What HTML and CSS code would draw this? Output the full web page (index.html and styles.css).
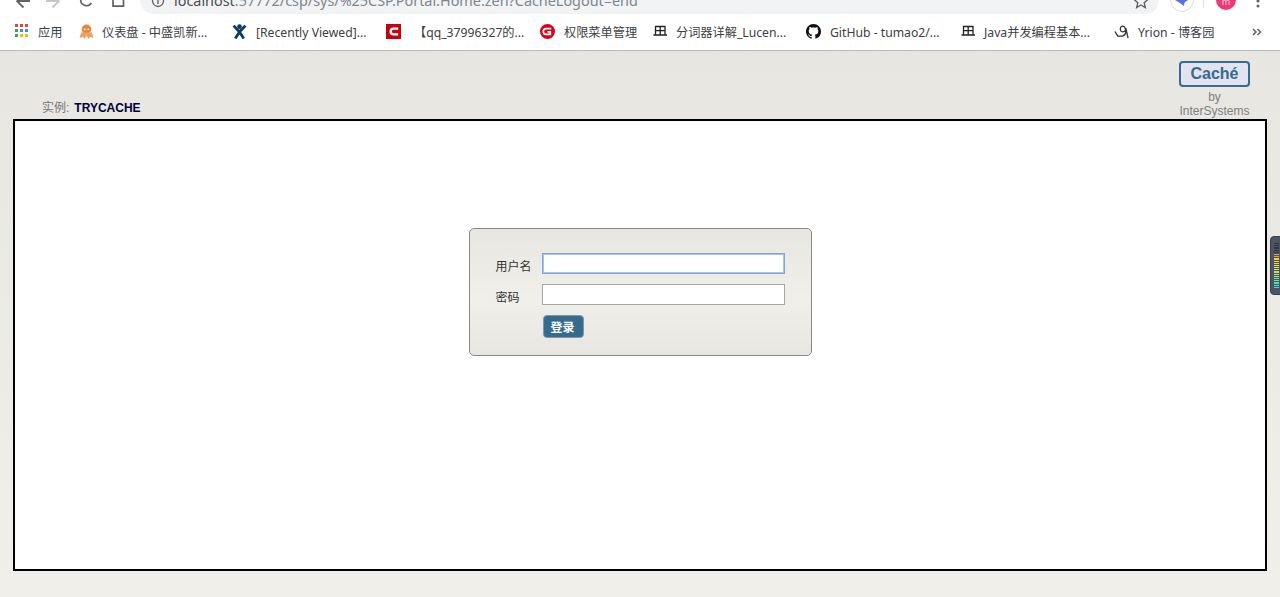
FILE: index.html
```html
<!DOCTYPE html>
<html lang="zh">
<head>
<meta charset="utf-8">
<title>Caché</title>
<link rel="stylesheet" href="styles.css">
</head>
<body>
<div class="toolbar">
  <div class="nav">
    <svg class="nav-icon" viewBox="0 0 16 14"><path d="M16 1H3M9.500 7.500L2.500 .5" fill="none" stroke="#5f6368" stroke-width="1.800"/></svg>
    <svg class="nav-icon" viewBox="0 0 16 14"><path d="M0 1h13M6.500 7.500l7-7" fill="none" stroke="#c4c6c9" stroke-width="1.800"/></svg>
    <svg class="nav-icon" viewBox="0 0 16 14"><path d="M2.800 -1a5.800 5.800 0 0 0 10.600 4" fill="none" stroke="#5f6368" stroke-width="1.700"/></svg>
    <svg class="nav-icon" viewBox="0 0 16 14"><path d="M3 -1v7.200h10.500V-1" fill="none" stroke="#5f6368" stroke-width="1.700"/></svg>
  </div>
  <div class="omnibox">
    <svg class="info" viewBox="0 0 14 14"><circle cx="7" cy="1" r="5.500" fill="none" stroke="#5f6368" stroke-width="1.300"/><rect x="6.300" y="0" width="1.400" height="4" fill="#5f6368"/></svg>
    <span class="url"><span class="host">localhost</span>:57772/csp/sys/%25CSP.Portal.Home.zen?CacheLogout=end</span>
    <svg class="star" viewBox="0 0 16 14"><path d="M8 -6l2 5 5 .4-3.800 3.300 1.100 4.800L8 5 3.700 7.500l1.100-4.800L1 -.6l5-.4z" fill="none" stroke="#5f6368" stroke-width="1.400"/></svg>
  </div>
  <div class="ext">
    <svg class="ext-icon" viewBox="0 0 27 14"><circle cx="14" cy="0" r="11.500" fill="#fff" stroke="#dcdcdc"/><path d="M20 0L7 0l5 3 4 3 .5-3.500z" fill="#5b6ee1"/></svg>
    <span class="sep"></span>
    <span class="avatar">m</span>
    <svg class="dots" viewBox="0 0 4 14"><circle cx="2" cy="1" r="1.500" fill="#5f6368"/><circle cx="2" cy="6" r="1.500" fill="#5f6368"/></svg>
  </div>
</div>

<div class="bookmarks">
  <a class="bm w-apps"><svg class="bm-icon" viewBox="0 0 15 15"><g><rect x="0" y="0" width="3" height="3" fill="#ea4335"/><rect x="5" y="0" width="3" height="3" fill="#ea4335"/><rect x="10" y="0" width="3" height="3" fill="#ea4335"/><rect x="0" y="5" width="3" height="3" fill="#34a853"/><rect x="5" y="5" width="3" height="3" fill="#4285f4"/><rect x="10" y="5" width="3" height="3" fill="#4285f4"/><rect x="0" y="10" width="3" height="3" fill="#34a853"/><rect x="5" y="10" width="3" height="3" fill="#fbbc05"/><rect x="10" y="10" width="3" height="3" fill="#fbbc05"/></g></svg><span>应用</span></a>
  <a class="bm w-dash"><svg class="bm-icon" viewBox="0 0 14 14"><circle cx="7" cy="5" r="4.500" fill="#e8873a"/><path d="M2 8l-1.500 5 3-1 1.500 2 2-3 2 3 1.500-2 3 1L12 8z" fill="#f0a060"/><circle cx="5.300" cy="5" r=".9" fill="#fff"/><circle cx="8.700" cy="5" r=".9" fill="#fff"/></svg><span>仪表盘 - 中盛凯新...</span></a>
  <a class="bm w-conf wide"><svg class="bm-icon" viewBox="0 0 14 14"><circle cx="7" cy="2.500" r="2.200" fill="#0b3a63"/><path d="M1.500 1.500L7 7.500l5.500-6M3 13.500L7 7.500l4 6" fill="none" stroke="#0b3a63" stroke-width="2.600"/></svg><span>[Recently Viewed]...</span></a>
  <a class="bm w-qq"><svg class="bm-icon" viewBox="0 0 16 16"><rect width="16" height="16" fill="#c9000b"/><path d="M13 5H8a3 3 0 0 0 0 6h5" fill="none" stroke="#fff" stroke-width="2.500"/></svg><span class="bm-qq">【qq_37996327的...</span></a>
  <a class="bm w-perm wide"><svg class="bm-icon" viewBox="0 0 16 16"><circle cx="8" cy="8" r="8" fill="#d9001b"/><path d="M12 5H6.500a3 3 0 0 0 0 6H11V8.300H8" fill="none" stroke="#fff" stroke-width="1.800"/></svg><span>权限菜单管理</span></a>
  <a class="bm w-seg"><svg class="bm-icon" viewBox="0 0 15 15"><path d="M2.500 2.500h9.500v8.500H2.500zM2.500 6.700h9.500M7.200 2.500v8.500M.5 11h13.500" fill="none" stroke="#222" stroke-width="1.300"/></svg><span>分词器详解_Lucen...</span></a>
  <a class="bm w-git wide"><svg class="bm-icon" viewBox="0 0 16 16"><path fill="#111" d="M8 0C3.580 0 0 3.580 0 8c0 3.540 2.290 6.530 5.470 7.590.4.070.55-.17.55-.38 0-.19-.01-.82-.01-1.490-2.010.370-2.530-.49-2.690-.94-.09-.23-.48-.94-.82-1.130-.28-.15-.68-.52-.01-.53.630-.01 1.080.58 1.230.82.720 1.210 1.870.870 2.330.66.070-.52.280-.87.510-1.070-1.780-.2-3.640-.89-3.640-3.950 0-.87.310-1.590.82-2.150-.08-.2-.36-1.020.08-2.120 0 0 .67-.21 2.200.82.640-.18 1.320-.27 2-.27s1.360.09 2 .27c1.530-1.040 2.200-.82 2.200-.82.44 1.100.16 1.920.08 2.120.51.560.82 1.270.82 2.150 0 3.070-1.870 3.750-3.650 3.950.29.250.54.730.54 1.480 0 1.070-.01 1.930-.01 2.200 0 .21.15.46.55.38A8.013 8.013 0 0 0 16 8c0-4.420-3.580-8-8-8z"/></svg><span>GitHub - tumao2/...</span></a>
  <a class="bm w-java"><svg class="bm-icon" viewBox="0 0 15 15"><path d="M2.500 2.500h9.500v8.500H2.500zM2.500 6.700h9.500M7.200 2.500v8.500M.5 11h13.500" fill="none" stroke="#222" stroke-width="1.300"/></svg><span>Java并发编程基本...</span></a>
  <a class="bm w-yrion wide"><svg class="bm-icon" viewBox="0 0 16 16"><path d="M1 8l3 5h5c4-1 5-7 2-10C8 1 6 4 7 7c1 2 4 2 6-1l2 9" fill="none" stroke="#333" stroke-width="1.400"/></svg><span>Yrion - 博客园</span></a>
  <svg class="more" viewBox="0 0 10 8"><path d="M1 1l3 3-3 3M5.500 1l3 3-3 3" fill="none" stroke="#5f6368" stroke-width="1.500"/></svg>
</div>

<main class="page">
  <header class="head">
    <div class="instance"><span class="inst-label">实例:</span><span class="inst-name">TRYCACHE</span></div>
    <div class="brand">
      <div class="logo">Caché</div>
      <div class="by">by<br>InterSystems</div>
    </div>
  </header>
  <section class="frame">
    <form class="login">
      <div class="labels">
        <label class="lbl">用户名</label>
        <label class="lbl lbl-second">密码</label>
      </div>
      <div class="fields">
        <div class="input focused"></div>
        <div class="input"></div>
        <div class="btn">登录</div>
      </div>
    </form>
  </section>
</main>

<div class="meter"><div class="meter-bars">
  <i class="off"></i><i class="off"></i><i class="off"></i><i class="off"></i><i class="off"></i>
  <i class="c1"></i><i class="c1"></i><i class="c2"></i><i class="c2"></i><i class="c2"></i><i class="c3"></i><i class="c3"></i><i class="c3"></i><i class="c4"></i><i class="c4"></i><i class="c4"></i><i class="c5"></i><i class="c5"></i><i class="c6"></i><i class="c6"></i><i class="c6"></i>
</div></div>
</body>
</html>
```
FILE: styles.css
```css
* { box-sizing: border-box; }
html, body { margin: 0; padding: 0; height: 100%; overflow: hidden; }
body {
  font-family: "Liberation Sans", "Noto Sans CJK SC", sans-serif;
  background: #fff;
  display: flex;
  flex-direction: column;
}
.toolbar {
  height: 14px;
  display: flex;
  overflow: hidden;
  background: #fff;
  flex: none;
}
.nav { width: 140px; display: flex; gap: 16px; padding-left: 14px; flex: none; }
.nav-icon { width: 16px; height: 14px; flex: none; overflow: hidden; }
.omnibox {
  width: 1019px;
  height: 14px;
  background: #f1f3f4;
  border-radius: 0 0 14px 14px;
  display: flex;
  padding-left: 11px;
  padding-right: 10px;
  flex: none;
}
.info { width: 14px; height: 14px; flex: none; }
.url {
  margin-left: 9px;
  flex: 1;
  font: 14.4px/14px "Noto Sans", sans-serif;
  color: #80868b;
  margin-top: -6px;
  white-space: nowrap;
}
.host { color: #4a4e52; }
.star { width: 16px; height: 14px; flex: none; }
.ext { display: flex; flex: none; padding-left: 9px; }
.ext-icon { width: 27px; height: 14px; flex: none; }
.sep { width: 1px; height: 7px; background: #dadce0; margin-left: 8px; flex: none; }
.avatar {
  width: 20px; height: 20px; margin: -10px 0 0 12px; border-radius: 50%;
  background: #ec3a78; color: #fcc; font: 9px/24px "Noto Sans", sans-serif; text-align: center; flex: none;
}
.dots { width: 4px; height: 14px; margin-left: 20px; flex: none; }

.bookmarks {
  height: 37px;
  flex: none;
  display: flex;
  align-items: center;
  padding: 0 19px 1px 15px;
  background: #fff;
  border-bottom: 1px solid #b9b9b9;
  font: 12.2px/16px "Noto Sans", "Noto Sans CJK SC", sans-serif;
  color: #3c4043;
}
.bm { display: flex; align-items: center; flex: none; white-space: nowrap; }
.bm span { padding-top: 2px; }
.bm-icon { width: 15px; height: 15px; margin-right: 8px; flex: none; }
.wide .bm-icon { margin-right: 9px; }
.bm-qq { margin-left: 5px; margin-right: -5px; }
.w-apps { width: 64px; }
.w-dash { width: 153px; }
.w-conf { width: 154px; }
.w-qq { width: 154px; }
.w-perm { width: 113px; }
.w-seg { width: 153px; }
.w-git { width: 155px; }
.w-java { width: 153px; }
.w-yrion { width: 139px; }
.more { width: 10px; height: 8px; flex: none; margin-left: -1px; }

.page {
  flex: 1;
  display: flex;
  flex-direction: column;
  padding: 0 13px 26px;
  background: linear-gradient(#e7e6e1, #f0efea);
}
.head {
  height: 68px;
  flex: none;
  display: flex;
  justify-content: space-between;
  align-items: flex-end;
  padding-left: 29px;
  padding-right: 17px;
}
.instance { font-size: 12px; line-height: 14px; padding-bottom: 4px; display: flex; gap: 5px; }
.inst-label { color: #777; }
.inst-name { font-weight: bold; color: #000038; }
.brand { width: 71px; text-align: center; color: #808080; font-size: 12px; align-self: flex-start; padding-top: 10px; }
.logo {
  height: 26px;
  border: 2px solid #356b8d;
  border-radius: 4px;
  background: #e3e3ef;
  color: #356b8d;
  font-size: 16px;
  font-weight: bold;
  line-height: 22px;
}
.by { line-height: 14px; margin-top: 3px; white-space: nowrap; margin-left: -5px; margin-right: -5px; }
.frame {
  flex: none;
  height: 452px;
  border: 2px solid #000;
  background: #fff;
  display: flex;
  justify-content: center;
  align-items: flex-start;
  padding-top: 107px;
}
.login {
  width: 343px;
  height: 128px;
  border: 1px solid #888;
  border-radius: 5px;
  background: linear-gradient(#e7e6e1, #f0efea 55%, #e7e6e1);
  display: flex;
  padding: 24px 0 0 25px;
  font-size: 12px;
  color: #333;
}
.labels { width: 47px; flex: none; padding-top: 6px; padding-left: 1px; font-family: "Noto Sans CJK SC", sans-serif; }
.lbl { display: block; line-height: 14px; }
.lbl-second { margin-top: 17px; }
.fields { display: flex; flex-direction: column; }
.input { width: 243px; height: 21px; background: #fff; border: 1px solid #a6a6a6; margin-bottom: 10px; }
.focused { border-color: #7da2e0; box-shadow: 0 0 0 1px #aac4ee inset; }
.btn {
  width: 41px; height: 23px; margin: 0 0 0 1px;
  background: #356b8d; border: 1px solid #7f97a8; border-radius: 4px;
  color: #fff; font-weight: bold; font-size: 12px; line-height: 21px; text-align: center;
  font-family: "Noto Sans CJK SC", sans-serif;
  text-indent: -1px;
}
.meter {
  position: absolute;
  left: 1270px;
  top: 236px;
  width: 14px;
  height: 59px;
  border-radius: 4px;
  background: #4b5563;
  border: 1px solid #3a404c;
}
.meter-bars { display: grid; grid-template-columns: 5px; grid-auto-rows: 1fr; row-gap: 1px; height: 45px; margin: 6px 0 0 3px; }
.meter-bars i { display: block; }
.off { background: #2f3540; }
.c1 { background: #f0a030; }
.c2 { background: #f4d040; }
.c3 { background: #e8e850; }
.c4 { background: #b0ea60; }
.c5 { background: #70e890; }
.c6 { background: #40e0c0; }
```
